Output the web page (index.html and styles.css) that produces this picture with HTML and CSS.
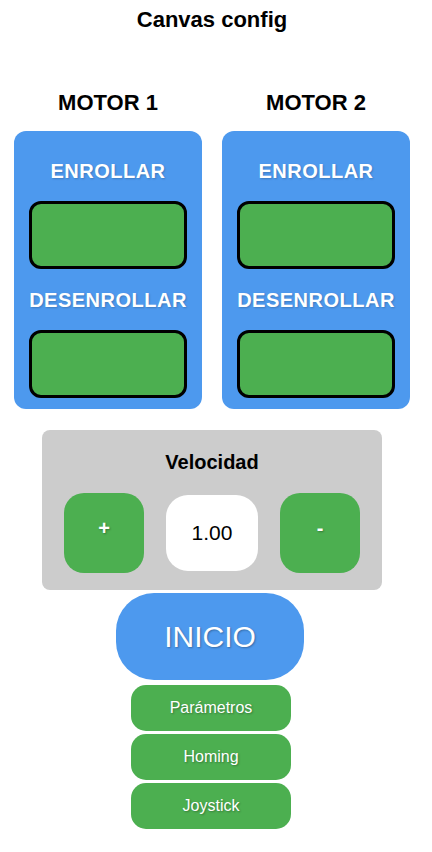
FILE: index.html
```html
<!DOCTYPE html>
<html lang="es">
<head>
  <meta charset="UTF-8">
  <meta name="viewport" content="width=device-width, initial-scale=1.0">
  <title>Canvas config</title>
  <link rel="stylesheet" href="styles.css">
</head>
<body>
  <div class="app">
    <h1 class="title">Canvas config</h1>

    <div class="motors">
      <div class="motor">
        <h2 class="motor-title">MOTOR 1</h2>
        <div class="motor-panel">
          <div class="motor-label">ENROLLAR</div>
          <button class="motor-btn"></button>
          <div class="motor-label">DESENROLLAR</div>
          <button class="motor-btn"></button>
        </div>
      </div>
      <div class="motor">
        <h2 class="motor-title">MOTOR 2</h2>
        <div class="motor-panel">
          <div class="motor-label">ENROLLAR</div>
          <button class="motor-btn"></button>
          <div class="motor-label">DESENROLLAR</div>
          <button class="motor-btn"></button>
        </div>
      </div>
    </div>

    <div class="speed">
      <div class="speed-title">Velocidad</div>
      <div class="speed-row">
        <button class="speed-btn">+</button>
        <div class="speed-value">1.00</div>
        <button class="speed-btn">-</button>
      </div>
    </div>

    <button class="start-btn">INICIO</button>

    <button class="menu-btn first">Parámetros</button>
    <button class="menu-btn">Homing</button>
    <button class="menu-btn">Joystick</button>
  </div>
</body>
</html>
```

FILE: styles.css
```css
body {
  margin: 0;
  font-family: 'Liberation Sans', Arial, sans-serif;
  background: #ffffff;
  color: #000000;
}

button {
  font-family: 'Liberation Sans', Arial, sans-serif;
  border: none;
  cursor: pointer;
  padding: 0;
}

.app {
  width: 424px;
  display: flex;
  flex-direction: column;
  align-items: center;
}

.title {
  margin: 7px 0 0;
  font-size: 22px;
  line-height: 25px;
  font-weight: bold;
}

.motors {
  display: flex;
  gap: 20px;
  margin-top: 58px;
}

.motor {
  width: 188px;
  display: flex;
  flex-direction: column;
}

.motor-title {
  margin: 0 0 16px;
  text-align: center;
  font-size: 22px;
  line-height: 25px;
}

.motor-panel {
  background: #4d99ee;
  border-radius: 12px;
  padding: 29px 15px 11px;
  display: flex;
  flex-direction: column;
}

.motor-label {
  color: #ffffff;
  font-weight: bold;
  font-size: 20px;
  line-height: 23px;
  letter-spacing: 0.5px;
  text-align: center;
  margin-bottom: 18px;
  text-shadow: 1px 1px 2px rgba(0, 0, 0, 0.2);
}

.motor-btn {
  height: 68px;
  background: #4caf50;
  border: 3px solid #000000;
  border-radius: 12px;
  margin-bottom: 20px;
}

.motor-btn:last-child {
  margin-bottom: 0;
}

.speed {
  width: 340px;
  box-sizing: border-box;
  margin-top: 21px;
  background: #cccccc;
  border-radius: 8px;
  padding: 21px 22px 17px;
}

.speed-title {
  text-align: center;
  font-weight: bold;
  font-size: 20px;
  line-height: 23px;
  margin-bottom: 19px;
}

.speed-row {
  display: flex;
  align-items: center;
  gap: 22px;
}

.speed-btn {
  width: 80px;
  height: 80px;
  border-radius: 20px;
  background: #4caf50;
  color: #ffffff;
  font-size: 20px;
  font-weight: bold;
  text-shadow: 1px 1px 2px rgba(0, 0, 0, 0.3);
  padding-bottom: 10px;
}

.speed-value {
  width: 92px;
  height: 76px;
  border-radius: 22px;
  background: #ffffff;
  display: flex;
  align-items: center;
  justify-content: center;
  font-size: 21px;
}

.start-btn {
  width: 188px;
  height: 87px;
  margin: 3px 4px 0 0;
  border-radius: 38px;
  background: #4d99ee;
  color: #ffffff;
  font-size: 30px;
  text-shadow: 1px 1px 2px rgba(0, 0, 0, 0.3);
}

.menu-btn {
  width: 160px;
  height: 46px;
  margin: 3px 2px 0 0;
  border-radius: 15px;
  background: #4caf50;
  color: #ffffff;
  font-size: 16px;
  text-shadow: 1px 1px 2px rgba(0, 0, 0, 0.3);
}

.menu-btn.first {
  margin-top: 5px;
}
```
